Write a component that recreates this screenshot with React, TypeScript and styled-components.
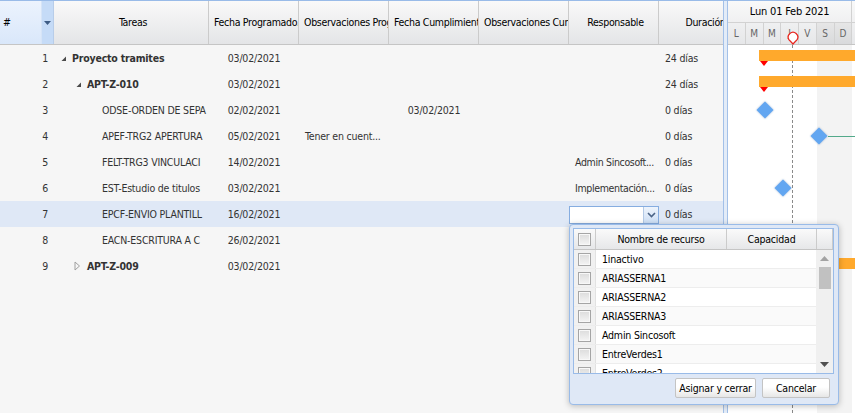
import styled, { createGlobalStyle } from "styled-components";

const FONT = `"DejaVu Sans Condensed", "Liberation Sans", Arial, sans-serif`;

const GlobalStyle = createGlobalStyle`
  html, body { margin: 0; padding: 0; background: #fff; }
  body { font-family: ${FONT}; font-size: 10.5px; letter-spacing: -0.2px; color: #333; }
  * { box-sizing: border-box; }
`;

const DAY = 17.75;

const Root = styled.div`
  position: relative;
  width: 855px;
  height: 413px;
  overflow: hidden;
  display: flex;
  border-top: 1px solid #99bbe8;
  background: #fff;
`;

// ---- panel izquierdo (grid) ----
const LeftPanel = styled.div`
  width: 723px;
  flex: none;
  display: flex;
  flex-direction: column;
  overflow: hidden;
  background: #f6f6f6;
`;

const HeaderRow = styled.div`
  display: flex;
  height: 44px;
  flex: none;
  border-bottom: 1px solid #c5c5c5;
  background: linear-gradient(#f9f9f9, #e4e5e7);
`;

const HeadCell = styled.div<{ $w: number }>`
  width: ${(p) => p.$w}px;
  flex: none;
  line-height: 43px;
  text-align: center;
  border-right: 1px solid #cbcbcb;
  overflow: hidden;
  white-space: nowrap;
  letter-spacing: -0.3px;
  color: #000;
  padding: 0 1px 0 5px;
`;

const NumHead = styled.div`
  width: 42px;
  flex: none;
  line-height: 43px;
  padding-left: 3px;
  color: #000;
  background: linear-gradient(#ecf3fd, #d9e7fa);
  border-right: 1px solid #d6e4f7;
`;

const HeadTrigger = styled.div`
  width: 12px;
  flex: none;
  display: flex;
  align-items: center;
  justify-content: center;
  background: #c5dbf7;
  border-right: 1px solid #b8cde9;
`;

const Body = styled.div`
  display: flex;
  flex-direction: column;
`;

const Row = styled.div<{ $selected?: boolean }>`
  display: flex;
  height: 26px;
  flex: none;
  align-items: center;
  background: ${(p) => (p.$selected ? "#dfe8f6" : "transparent")};
`;

const Cell = styled.div<{ $w: number; $align?: "left" | "center" | "right"; $tight?: boolean }>`
  width: ${(p) => p.$w}px;
  flex: none;
  padding: ${(p) => (p.$tight ? "0 0 0 6px" : "0 6px")};
  overflow: hidden;
  white-space: nowrap;
  text-overflow: clip;
  letter-spacing: ${(p) => (p.$tight ? "-0.35px" : "inherit")};
  text-align: ${(p) => p.$align || "left"};
  color: #333;
`;

const TaskCell = styled.div<{ $bold?: boolean }>`
  width: 155px;
  flex: none;
  display: flex;
  align-items: center;
  padding-left: 3px;
  overflow: hidden;
  white-space: nowrap;
  font-weight: ${(p) => (p.$bold ? 700 : 400)};
  color: #333;
`;

const Indent = styled.span<{ $level: number }>`
  width: ${(p) => p.$level * 15}px;
  flex: none;
`;

const Expander = styled.span`
  width: 15px;
  height: 16px;
  flex: none;
  display: flex;
  align-items: center;
`;

const EditorCell = styled.div`
  width: 90px;
  flex: none;
  padding-top: 1px;
`;

const Combo = styled.div`
  display: flex;
  width: 90px;
  height: 18px;
  border: 1px solid #86ade0;
  background: #fff;
`;

const ComboTrigger = styled.div`
  margin-left: auto;
  width: 15px;
  border-left: 1px solid #b3c9e6;
  background: linear-gradient(#eef4fc, #cddff6);
  display: flex;
  align-items: center;
  justify-content: center;
`;

// ---- separador ----
const Splitter = styled.div`
  width: 5px;
  flex: none;
  border-left: 1px solid #a3c0e8;
  border-right: 1px solid #a3c0e8;
  background: #e3ecf8;
`;

// ---- gantt ----
const GanttPanel = styled.div`
  flex: 1;
  display: flex;
  flex-direction: column;
  overflow: hidden;
`;

const GanttHeader = styled.div`
  height: 44px;
  flex: none;
  display: flex;
  flex-direction: column;
  border-bottom: 1px solid #c5c5c5;
  background: linear-gradient(#f9f9f9, #e6e7e9);
`;

const WeekRow = styled.div`
  height: 22px;
  flex: none;
  display: flex;
  border-bottom: 1px solid #d2d2d2;
`;

const WeekLabel = styled.div`
  width: ${DAY * 7}px;
  flex: none;
  text-align: center;
  line-height: 21px;
  font-size: 11px;
  color: #000;
  border-right: 1px solid #d2d2d2;
`;

const DaysRow = styled.div`
  position: relative;
  flex: 1;
  display: flex;
`;

const DayCell = styled.div<{ $weekend?: boolean }>`
  width: ${DAY}px;
  flex: none;
  text-align: center;
  line-height: 21px;
  font-size: 10px;
  letter-spacing: 0;
  color: #666;
  border-right: 1px solid #d2d2d2;
  background: ${(p) => (p.$weekend ? "linear-gradient(#e6e6e6, #d9dadc)" : "transparent")};
`;

const TodayMarker = styled.svg`
  position: absolute;
  left: 59px;
  top: 8px;
`;

const GanttBody = styled.div`
  position: relative;
  flex: 1;
  display: flex;
  flex-direction: column;
  background: linear-gradient(
    to right,
    #fff ${DAY * 5}px,
    #f3f3f3 ${DAY * 5}px,
    #f3f3f3 ${DAY * 7}px,
    #fff ${DAY * 7}px
  );
`;

const TodayLine = styled.div`
  position: absolute;
  left: 64px;
  top: 0;
  bottom: 0;
  border-left: 1px dashed #8a8a8a;
`;

const GanttRow = styled.div`
  position: relative;
  height: 26px;
  flex: none;
`;

const Bar = styled.div`
  position: absolute;
  top: 5px;
  right: -4px;
  height: 11px;
  background: #ffa92c;
`;

const Baseline = styled.div`
  position: absolute;
  top: 16px;
  width: 0;
  height: 0;
  border-left: 4px solid transparent;
  border-right: 4px solid transparent;
  border-top: 5px solid #f00;
`;

const Milestone = styled.div`
  position: absolute;
  top: 7px;
  width: 12px;
  height: 12px;
  background: #62a6f1;
  transform: rotate(45deg);
  box-shadow: 0 0 2px rgba(40, 90, 160, 0.45);
`;

const Link = styled.div`
  position: absolute;
  top: 13px;
  right: 0;
  height: 1px;
  background: #52a98a;
`;

// ---- selector de recursos ----
const Popup = styled.div`
  position: absolute;
  left: 569px;
  top: 223px;
  width: 270px;
  height: 181px;
  padding: 3px 4px 0 3px;
  display: flex;
  flex-direction: column;
  background: #dfe8f6;
  border: 1px solid #99bbe8;
  border-radius: 4px;
  box-shadow: 0 1px 6px rgba(0, 0, 0, 0.25);
`;

const ResGrid = styled.div`
  height: 146px;
  flex: none;
  display: flex;
  flex-direction: column;
  background: #fff;
  border: 1px solid #99bbe8;
  overflow: hidden;
`;

const ResHeader = styled.div`
  height: 21px;
  flex: none;
  display: grid;
  grid-template-columns: 22px 131px 90px 1fr;
  border-bottom: 1px solid #c5c5c5;
  background: linear-gradient(#fafafa, #e6e7e9);
  color: #000;
`;

const ResHeadCell = styled.div`
  display: flex;
  align-items: center;
  justify-content: center;
  border-right: 1px solid #cbcbcb;
`;

const ResBody = styled.div`
  flex: 1;
  display: flex;
  overflow: hidden;
`;

const ResList = styled.div`
  flex: 1;
  display: flex;
  flex-direction: column;
`;

const ResRow = styled.div<{ $alt?: boolean }>`
  height: 19px;
  flex: none;
  display: grid;
  grid-template-columns: 22px 1fr;
  border-bottom: 1px solid #ededed;
  background: ${(p) => (p.$alt ? "#fafafa" : "#fff")};
`;

const ResCheckCell = styled.div`
  display: flex;
  align-items: center;
  justify-content: center;
  background: #f1f1f1;
  border-right: 1px solid #e2e2e2;
`;

const ResName = styled.div`
  display: flex;
  align-items: center;
  padding-left: 6px;
  color: #000;
`;

const Check = styled.span`
  width: 13px;
  height: 13px;
  border: 1px solid #a5a5a5;
  background: linear-gradient(#dcdcdc, #f4f4f4);
  box-shadow: inset 0 0 0 1px #f8f8f8;
`;

const Scrollbar = styled.div`
  width: 17px;
  flex: none;
  display: flex;
  flex-direction: column;
  align-items: center;
  background: #f0f0f0;
`;

const ScrollArrow = styled.div`
  height: 17px;
  flex: none;
  display: flex;
  align-items: center;
  justify-content: center;
`;

const ScrollThumb = styled.div`
  width: 12px;
  height: 22px;
  background: #c1c1c1;
`;

const ScrollTrack = styled.div`
  flex: 1;
`;

const Buttons = styled.div`
  display: flex;
  justify-content: flex-end;
  gap: 6px;
  padding: 4px 4px 0 0;
`;

const Button = styled.div<{ $w: number }>`
  width: ${(p) => p.$w}px;
  height: 20px;
  display: flex;
  align-items: center;
  justify-content: center;
  white-space: nowrap;
  border: 1px solid #c4c4c4;
  border-radius: 2px;
  background: linear-gradient(#ffffff 45%, #e6e6e6);
  color: #000;
`;

interface Task {
  n: number;
  name: string;
  level: number;
  node?: "open" | "closed";
  prog: string;
  obs?: string;
  cump?: string;
  resp?: string;
  dur?: string;
  editing?: boolean;
}

const tasks: Task[] = [
  { n: 1, name: "Proyecto tramites", level: 0, node: "open", prog: "03/02/2021", dur: "24 días" },
  { n: 2, name: "APT-Z-010", level: 1, node: "open", prog: "03/02/2021", dur: "24 días" },
  { n: 3, name: "ODSE-ORDEN DE SEPA", level: 2, prog: "02/02/2021", cump: "03/02/2021", dur: "0 días" },
  { n: 4, name: "APEF-TRG2 APERTURA", level: 2, prog: "05/02/2021", obs: "Tener en cuent...", dur: "0 días" },
  { n: 5, name: "FELT-TRG3 VINCULACI", level: 2, prog: "14/02/2021", resp: "Admin Sincosoft...", dur: "0 días" },
  { n: 6, name: "EST-Estudio de titulos", level: 2, prog: "03/02/2021", resp: "Implementación...", dur: "0 días" },
  { n: 7, name: "EPCF-ENVIO PLANTILL", level: 2, prog: "16/02/2021", editing: true, dur: "0 días" },
  { n: 8, name: "EACN-ESCRITURA A C", level: 2, prog: "26/02/2021" },
  { n: 9, name: "APT-Z-009", level: 1, node: "closed", prog: "03/02/2021" },
];

// elementos del gantt por fila (posicion en px desde el 01/02)
const gantt: { bar?: number; milestone?: number; link?: number }[] = [
  { bar: 31 },
  { bar: 31 },
  { milestone: 37 },
  { milestone: 91, link: 100 },
  {},
  { milestone: 55 },
  {},
  {},
  { bar: 111 },
];

const resources = [
  "1inactivo",
  "ARIASSERNA1",
  "ARIASSERNA2",
  "ARIASSERNA3",
  "Admin Sincosoft",
  "EntreVerdes1",
  "EntreVerdes2",
];

const days = ["L", "M", "M", "J", "V", "S", "D"];

const columns = [
  { title: "Fecha Programado.", w: 90 },
  { title: "Observaciones Programación", w: 90 },
  { title: "Fecha Cumplimiento", w: 90 },
  { title: "Observaciones Cumplimiento", w: 90 },
  { title: "Responsable", w: 90 },
  { title: "Duración", w: 90 },
];

const NodeIcon = ({ node }: { node?: "open" | "closed" }) => {
  if (node === "open")
    return (
      <svg width="7" height="7" style={{ marginLeft: 3 }}>
        <path d="M6 1.5 L6 6 L1.5 6 Z" fill="#4a4a4a" />
      </svg>
    );
  if (node === "closed")
    return (
      <svg width="7" height="10" style={{ marginLeft: 2 }}>
        <path d="M1 1 L5.5 5 L1 9 Z" fill="none" stroke="#a0a0a0" />
      </svg>
    );
  return null;
};

const App = () => {
  return (
    <>
      <GlobalStyle />
      <Root>
        <LeftPanel>
          <HeaderRow>
            <NumHead>#</NumHead>
            <HeadTrigger>
              <svg width="7" height="4">
                <path d="M0 0 L7 0 L3.5 4 Z" fill="#3d5c85" />
              </svg>
            </HeadTrigger>
            <HeadCell $w={155}>Tareas</HeadCell>
            {columns.map((c) => (
              <HeadCell key={c.title} $w={c.w}>
                {c.title}
              </HeadCell>
            ))}
          </HeaderRow>
          <Body>
            {tasks.map((t) => (
              <Row key={t.n} $selected={t.editing}>
                <Cell $w={54} $align="right">
                  {t.n}
                </Cell>
                <TaskCell $bold={!!t.node}>
                  <Indent $level={t.level} />
                  <Expander>
                    <NodeIcon node={t.node} />
                  </Expander>
                  {t.name}
                </TaskCell>
                <Cell $w={90} $align="center">
                  {t.prog}
                </Cell>
                <Cell $w={90}>{t.obs}</Cell>
                <Cell $w={90} $align="center">
                  {t.cump}
                </Cell>
                <Cell $w={90} />
                {t.editing ? (
                  <EditorCell>
                    <Combo>
                      <ComboTrigger>
                        <svg width="9" height="6">
                          <path d="M1 1 L4.5 4.5 L8 1" fill="none" stroke="#4b6487" strokeWidth="1.6" />
                        </svg>
                      </ComboTrigger>
                    </Combo>
                  </EditorCell>
                ) : (
                  <Cell $w={90} $tight>
                    {t.resp}
                  </Cell>
                )}
                <Cell $w={90}>{t.dur}</Cell>
              </Row>
            ))}
          </Body>
        </LeftPanel>

        <Splitter />

        <GanttPanel>
          <GanttHeader>
            <WeekRow>
              <WeekLabel>Lun 01 Feb 2021</WeekLabel>
            </WeekRow>
            <DaysRow>
              {days.map((d, i) => (
                <DayCell key={i} $weekend={i >= 5}>
                  {d}
                </DayCell>
              ))}
              <TodayMarker width="12" height="14">
                <path d="M6 13 L1.9 8.6 A4.8 4.8 0 1 1 10.1 8.6 Z" fill="#fff" stroke="#e8251f" strokeWidth="1.3" />
              </TodayMarker>
            </DaysRow>
          </GanttHeader>
          <GanttBody>
            <TodayLine />
            {gantt.map((g, i) => (
              <GanttRow key={i}>
                {g.bar !== undefined && (
                  <>
                    <Bar style={{ left: g.bar }} />
                    {g.bar < 100 && <Baseline style={{ left: g.bar + 1 }} />}
                  </>
                )}
                {g.link !== undefined && <Link style={{ left: g.link }} />}
                {g.milestone !== undefined && <Milestone style={{ left: g.milestone - 6 }} />}
              </GanttRow>
            ))}
          </GanttBody>
        </GanttPanel>

        <Popup>
          <ResGrid>
            <ResHeader>
              <ResHeadCell>
                <Check />
              </ResHeadCell>
              <ResHeadCell>Nombre de recurso</ResHeadCell>
              <ResHeadCell>Capacidad</ResHeadCell>
              <ResHeadCell />
            </ResHeader>
            <ResBody>
              <ResList>
                {resources.map((r, i) => (
                  <ResRow key={r} $alt={i % 2 === 1}>
                    <ResCheckCell>
                      <Check />
                    </ResCheckCell>
                    <ResName>{r}</ResName>
                  </ResRow>
                ))}
              </ResList>
              <Scrollbar>
                <ScrollArrow>
                  <svg width="9" height="5">
                    <path d="M0 5 L4.5 0 L9 5 Z" fill="#a3a3a3" />
                  </svg>
                </ScrollArrow>
                <ScrollThumb />
                <ScrollTrack />
                <ScrollArrow>
                  <svg width="9" height="5">
                    <path d="M0 0 L9 0 L4.5 5 Z" fill="#505050" />
                  </svg>
                </ScrollArrow>
              </Scrollbar>
            </ResBody>
          </ResGrid>
          <Buttons>
            <Button $w={81}>Asignar y cerrar</Button>
            <Button $w={68}>Cancelar</Button>
          </Buttons>
        </Popup>
      </Root>
    </>
  );
};

export default App;
